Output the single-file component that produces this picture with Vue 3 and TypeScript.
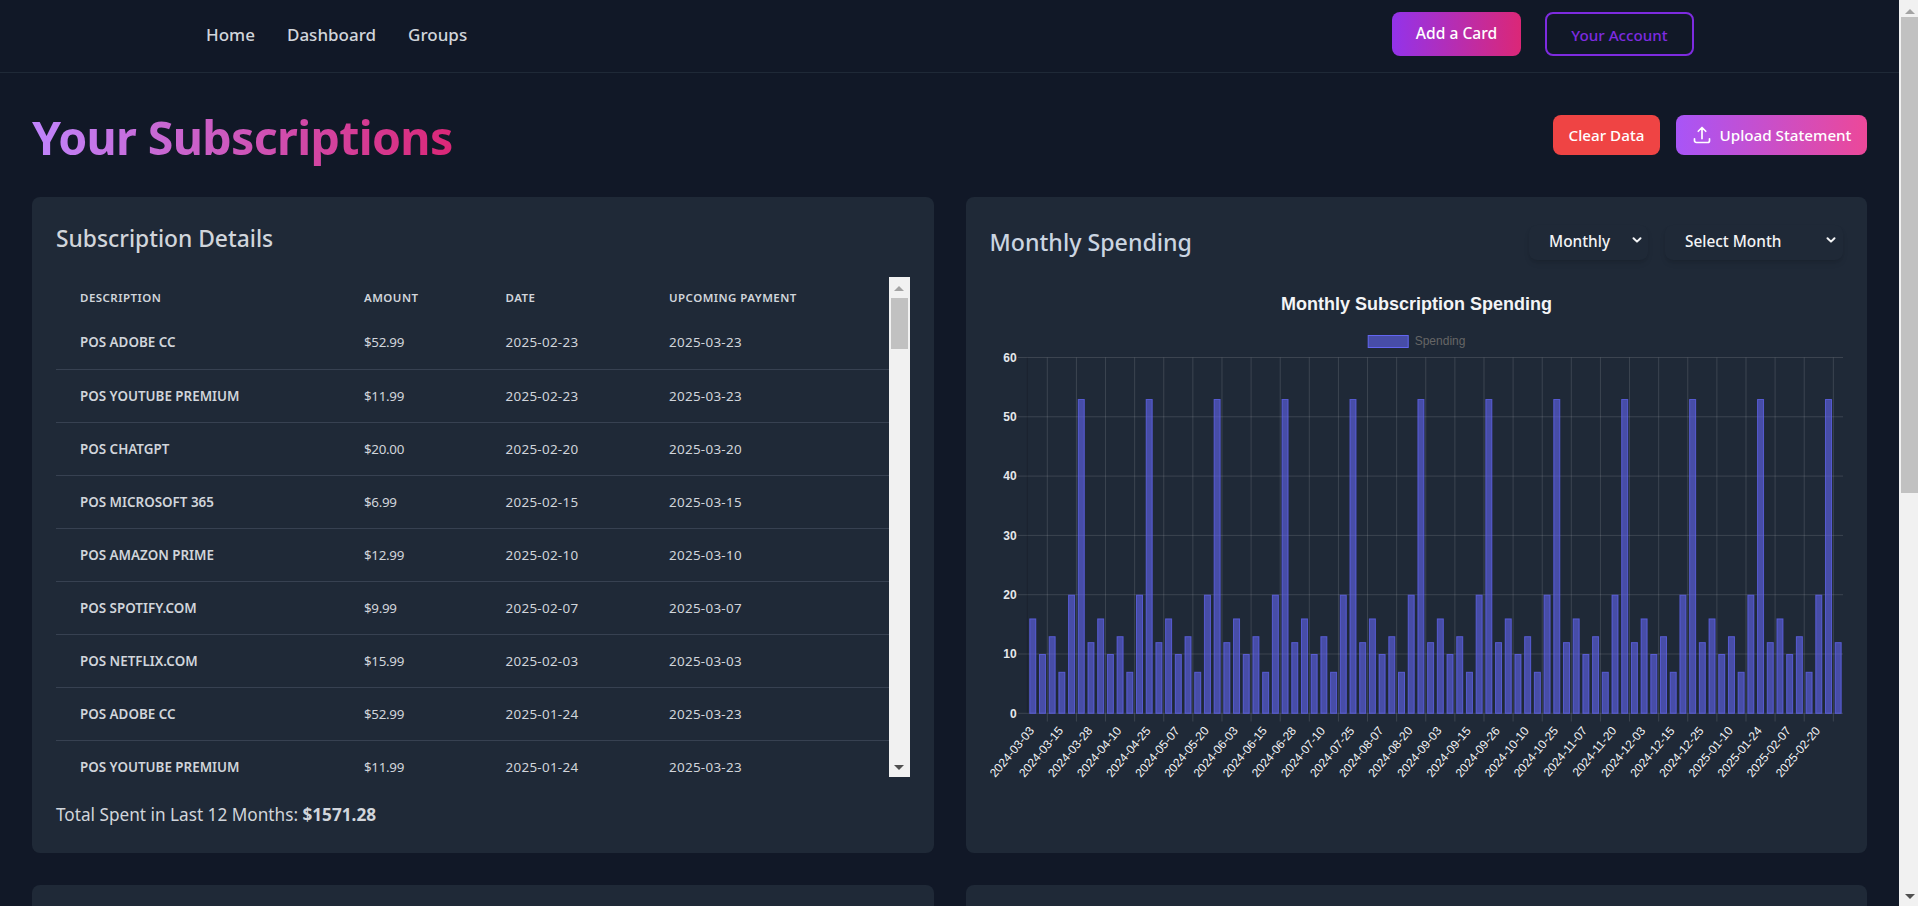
<script setup lang="ts">
const links = ['Home', 'Dashboard', 'Groups']
const rows = [
  ['POS ADOBE CC', '$52.99', '2025-02-23', '2025-03-23'],
  ['POS YOUTUBE PREMIUM', '$11.99', '2025-02-23', '2025-03-23'],
  ['POS CHATGPT', '$20.00', '2025-02-20', '2025-03-20'],
  ['POS MICROSOFT 365', '$6.99', '2025-02-15', '2025-03-15'],
  ['POS AMAZON PRIME', '$12.99', '2025-02-10', '2025-03-10'],
  ['POS SPOTIFY.COM', '$9.99', '2025-02-07', '2025-03-07'],
  ['POS NETFLIX.COM', '$15.99', '2025-02-03', '2025-03-03'],
  ['POS ADOBE CC', '$52.99', '2025-01-24', '2025-03-23'],
  ['POS YOUTUBE PREMIUM', '$11.99', '2025-01-24', '2025-03-23'],
]
const labels = [
  '2024-03-03', '2024-03-15', '2024-03-28', '2024-04-10', '2024-04-25', '2024-05-07', '2024-05-20',
  '2024-06-03', '2024-06-15', '2024-06-28', '2024-07-10', '2024-07-25', '2024-08-07', '2024-08-20',
  '2024-09-03', '2024-09-15', '2024-09-26', '2024-10-10', '2024-10-25', '2024-11-07', '2024-11-20',
  '2024-12-03', '2024-12-15', '2024-12-25', '2025-01-10', '2025-01-24', '2025-02-07', '2025-02-20',
]
const cycle = [16, 10, 13, 7, 20, 53, 12]
const plotLeft = 37.9
const pitch = 9.704
const baseY = 433.3
const unit = 5.93
const plotRight = plotLeft + pitch * 84
const y = (v: number) => baseY - v * unit
const bars = Array.from({ length: 84 }, (_, i) => {
  const v = cycle[i % 7]
  return { x: plotLeft + pitch * i + 1.36 + 0.5, y: y(v) + 0.5, w: 5.99, h: v * unit - 0.5 }
})
const yTicks = [0, 10, 20, 30, 40, 50, 60].map((v) => ({ v, y: y(v) }))
const xLines = labels.map((_, i) => plotLeft + pitch * (2 + 3 * i))
const xLabels = labels.map((text, i) => ({ text, x: plotLeft + pitch * (0.5 + 3 * i) + 2, y: 451 }))
</script>

<template>
  <div class="shell">
    <div class="page">
      <nav class="nav">
        <div class="links">
          <a v-for="l in links" :key="l" class="link">{{ l }}</a>
        </div>
        <div class="nav-actions">
          <button class="btn add">Add a Card</button>
          <button class="btn account">Your Account</button>
        </div>
      </nav>

      <main class="main">
        <header class="title-row">
          <h1 class="title">Your Subscriptions</h1>
          <div class="actions">
            <button class="btn clear">Clear Data</button>
            <button class="btn upload">
              <svg width="20" height="20" viewBox="0 0 24 24" fill="none" stroke="currentColor" stroke-width="2" stroke-linecap="round" stroke-linejoin="round">
                <path d="M3 16.5v2.25A2.25 2.25 0 0 0 5.25 21h13.5A2.25 2.25 0 0 0 21 18.75V16.5M7.5 7.5 12 3m0 0 4.5 4.5M12 3v13.5" />
              </svg>
              <span>Upload Statement</span>
            </button>
          </div>
        </header>

        <div class="grid">
          <section class="card">
            <h2 class="card-title">Subscription Details</h2>
            <div class="table-box">
              <div class="table-clip">
                <table class="table">
                  <colgroup>
                    <col class="c1" /><col class="c2" /><col class="c3" /><col class="c4" />
                  </colgroup>
                  <thead>
                    <tr>
                      <th>Description</th><th>Amount</th><th>Date</th><th>Upcoming Payment</th>
                    </tr>
                  </thead>
                  <tbody>
                    <tr v-for="(r, i) in rows" :key="i">
                      <td class="desc">{{ r[0] }}</td>
                      <td class="amount">{{ r[1] }}</td>
                      <td class="date">{{ r[2] }}</td>
                      <td class="date">{{ r[3] }}</td>
                    </tr>
                  </tbody>
                </table>
              </div>
              <div class="inner-bar">
                <span class="arrow up light"></span>
                <span class="inner-thumb"></span>
                <span class="arrow down"></span>
              </div>
            </div>
            <p class="total">Total Spent in Last 12 Months: <strong>$1571.28</strong></p>
          </section>

          <section class="card">
            <div class="chart-head">
              <h2 class="card-title chart-title">Monthly Spending</h2>
              <div class="selects">
                <div class="select monthly">
                  <span>Monthly</span>
                  <svg width="12" height="12" viewBox="0 0 12 12" fill="none" stroke="currentColor" stroke-width="2" stroke-linecap="round" stroke-linejoin="round"><path d="M2.5 4.2 6 7.6l3.5-3.4" /></svg>
                </div>
                <div class="select month">
                  <span>Select Month</span>
                  <svg width="12" height="12" viewBox="0 0 12 12" fill="none" stroke="currentColor" stroke-width="2" stroke-linecap="round" stroke-linejoin="round"><path d="M2.5 4.2 6 7.6l3.5-3.4" /></svg>
                </div>
              </div>
            </div>
            <svg class="chart" width="853" height="548" viewBox="0 0 853 548">
              <text x="426.5" y="30" text-anchor="middle" class="c-title">Monthly Subscription Spending</text>
              <rect x="378.2" y="55.5" width="40" height="12" class="legend-box" />
              <text x="424.7" y="65" class="c-legend">Spending</text>

              <line v-for="t in yTicks" :key="'h' + t.v" x1="28" :x2="plotRight" :y1="t.y" :y2="t.y" class="grid-line" />
              <line v-for="(x, i) in xLines" :key="'v' + i" :x1="x" :x2="x" y1="77.5" y2="441.5" class="grid-line" />
              <line :x1="plotLeft - 0.6" :x2="plotLeft - 0.6" y1="77.5" y2="433.3" class="axis-line" />

              <rect v-for="(b, i) in bars" :key="'b' + i" :x="b.x" :y="b.y" :width="b.w" :height="b.h" class="bar" />

              <text v-for="t in yTicks" :key="'y' + t.v" x="26.7" :y="t.y + 4.3" text-anchor="end" class="y-label">{{ t.v }}</text>
              <text v-for="l in xLabels" :key="l.text" :x="l.x" :y="l.y" text-anchor="end" :transform="`rotate(-50 ${l.x} ${l.y})`" class="x-label">{{ l.text }}</text>
            </svg>
          </section>

          <section class="card stub"></section>
          <section class="card stub"></section>
        </div>
      </main>
    </div>

    <aside class="page-bar">
      <span class="arrow up light big"></span>
      <span class="page-thumb"></span>
      <span class="page-rest"></span>
      <span class="arrow down big"></span>
    </aside>
  </div>
</template>

<style scoped>
.shell {
  display: flex;
  width: 1918px;
  height: 906px;
  overflow: hidden;
  background: #111827;
  font-family: "Noto Sans", "Open Sans", sans-serif;
  color: #d1d5db;
}
.page {
  flex: 1;
  min-width: 0;
  overflow: hidden;
}
.nav {
  display: flex;
  align-items: center;
  justify-content: space-between;
  height: 73px;
  padding: 0 205px 4px 206px;
  box-sizing: border-box;
  border-bottom: 1px solid #1f2937;
}
.links {
  display: flex;
  gap: 32px;
  margin-top: 1px;
}
.link {
  font-size: 17px;
  font-weight: 500;
  color: #d1d5db;
}
.nav-actions {
  display: flex;
  gap: 24px;
}
.btn {
  display: inline-flex;
  align-items: center;
  justify-content: center;
  box-sizing: border-box;
  border: 0;
  border-radius: 8px;
  font-family: inherit;
  font-size: 15.2px;
  font-weight: 500;
  color: #fff;
}
.add {
  width: 129px;
  height: 44px;
  padding-bottom: 4px;
  font-size: 15.6px;
  background: linear-gradient(to right, #9333ea, #db2777);
}
.account {
  width: 149px;
  height: 44px;
  padding-top: 2px;
  background: transparent;
  border: 2px solid #7e2be0;
  color: #7e2be0;
}
.main {
  padding: 32px 32px 0;
}
.title-row {
  display: flex;
  align-items: center;
  justify-content: space-between;
  height: 60px;
  margin-bottom: 32px;
}
.title {
  margin: 4px 0 0;
  font-size: 46.5px;
  line-height: 60px;
  font-weight: 700;
  letter-spacing: -0.65px;
  background: linear-gradient(to right, #c084fc, #db2777);
  -webkit-background-clip: text;
  background-clip: text;
  color: transparent;
}
.actions {
  display: flex;
  gap: 16px;
}
.clear {
  width: 107px;
  height: 40px;
  background: #ef4444;
}
.upload {
  width: 191px;
  height: 40px;
  gap: 8px;
  background: linear-gradient(to right, #a855f7, #ec4899);
}
.grid {
  display: grid;
  grid-template-columns: 1fr 1fr;
  gap: 32px;
}
.card {
  box-sizing: border-box;
  height: 656px;
  padding: 24px;
  border-radius: 8px;
  background: #1f2937;
}
.card-title {
  margin: 0 0 20px;
  font-size: 22.8px;
  line-height: 36px;
  font-weight: 500;
  color: #d1d5db;
}
.table-box {
  display: flex;
  height: 500px;
}
.table-clip {
  flex: 1;
  min-width: 0;
  overflow: hidden;
}
.table {
  width: 100%;
  table-layout: fixed;
  border-collapse: collapse;
}
.c1 { width: 284px; }
.c2 { width: 141.5px; }
.c3 { width: 163.5px; }
th {
  height: 39px;
  padding: 1px 0 0 24px;
  box-sizing: border-box;
  text-align: left;
  font-size: 11.5px;
  font-weight: 600;
  letter-spacing: 0.04em;
  text-transform: uppercase;
  color: #d1d5db;
}
td {
  height: 53px;
  padding: 0 0 0 24px;
  box-sizing: border-box;
  font-size: 13.4px;
  color: #d1d5db;
  border-bottom: 1px solid #374151;
}
tbody tr:last-child td { border-bottom: 0; }
.desc {
  font-weight: 600;
}
.amount {
  letter-spacing: -0.3px;
}
.date {
  letter-spacing: 0.3px;
}
.inner-bar {
  display: flex;
  flex-direction: column;
  align-items: center;
  width: 21px;
  flex: none;
  background: #f1f1f1;
}
.inner-thumb {
  width: 17px;
  height: 51px;
  margin-top: 7px;
  background: #c1c1c1;
}
.arrow {
  flex: none;
  width: 0;
  height: 0;
  border-left: 5px solid transparent;
  border-right: 5px solid transparent;
}
.arrow.up {
  margin-top: 9px;
  border-bottom: 5px solid #a3a3a3;
}
.arrow.down {
  margin-top: auto;
  margin-bottom: 7px;
  border-top: 5px solid #505050;
}
.total {
  margin: 24px 0 0;
  font-size: 17.2px;
  line-height: 28px;
  color: #d1d5db;
}
.total strong {
  font-weight: 700;
}
.chart-head {
  display: flex;
  align-items: center;
  justify-content: space-between;
  height: 44px;
  margin: -1px 0 16px;
}
.chart-title {
  margin: 0;
  font-size: 23.2px;
  color: #cbd5e1;
}
.selects {
  display: flex;
  gap: 17px;
}
.select {
  display: flex;
  align-items: center;
  justify-content: space-between;
  box-sizing: border-box;
  height: 35px;
  padding: 0 6px 0 20px;
  border-radius: 8px;
  background: #1f2937;
  box-shadow: 0 4px 6px -1px rgba(0, 0, 0, 0.1), 0 2px 4px -2px rgba(0, 0, 0, 0.1);
  font-size: 15.4px;
  font-weight: 500;
  color: #f3f4f6;
}
.select span {
  margin-top: -2px;
}
.select svg {
  margin-bottom: 4px;
}
.monthly { width: 119px; padding-right: 5px; }
.month { width: 178px; }
.chart {
  display: block;
  font-family: "Liberation Sans", Arial, sans-serif;
}
.c-title {
  font-size: 18px;
  font-weight: 700;
  fill: #f3f4f6;
}
.c-legend {
  font-size: 12px;
  fill: #666666;
}
.legend-box {
  fill: rgba(99, 102, 241, 0.6);
  stroke: #6366f1;
  stroke-width: 1;
}
.grid-line {
  stroke: rgba(255, 255, 255, 0.13);
  stroke-width: 1;
}
.axis-line {
  stroke: rgba(0, 0, 0, 0.16);
  stroke-width: 1;
}
.bar {
  fill: rgba(99, 102, 241, 0.6);
  stroke: #6366f1;
  stroke-opacity: 0.75;
  stroke-width: 1;
}
.y-label {
  font-size: 12px;
  font-weight: 700;
  fill: #e5e7eb;
}
.x-label {
  font-size: 12px;
  fill: #f3f4f6;
}
.page-bar {
  display: flex;
  flex-direction: column;
  align-items: flex-end;
  width: 19px;
  flex: none;
  background: #f1f1f1;
}
.arrow.big {
  margin-right: 3px;
}
.page-thumb {
  flex: none;
  width: 17px;
  height: 476px;
  margin-top: 3px;
  background: #c1c1c1;
}
.page-rest {
  flex: 1;
}
.arrow.down.big {
  margin-top: 0;
  margin-bottom: 7px;
}
</style>

<style>
html, body {
  margin: 0;
  overflow: hidden;
  background: #111827;
}
</style>
